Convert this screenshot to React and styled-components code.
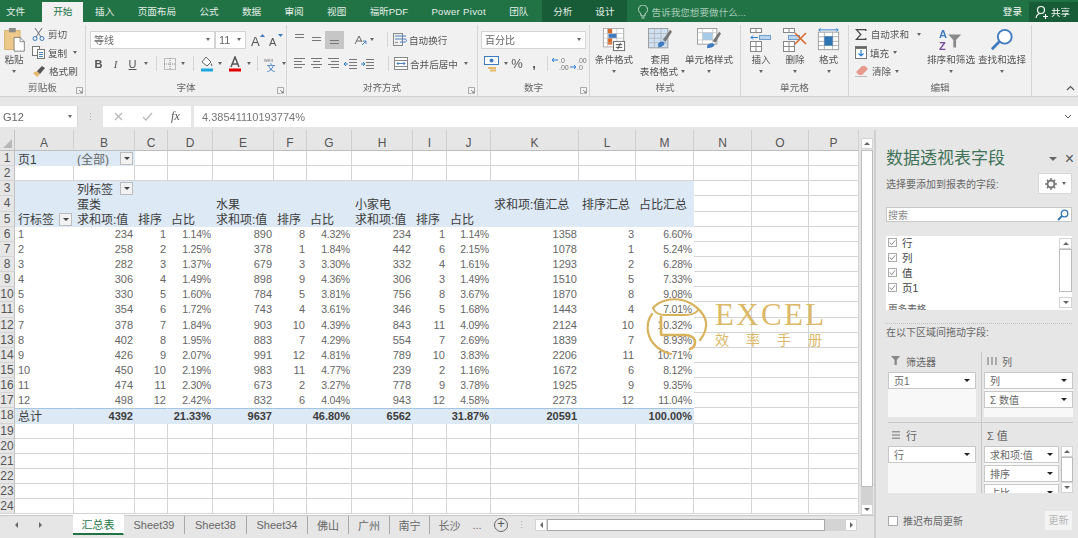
import React from "react";
import styled, { createGlobalStyle } from "styled-components";

const GlobalStyle = createGlobalStyle`
  html, body { margin: 0; padding: 0; background: #e6e6e6; overflow: hidden; }
  * { box-sizing: border-box; }
  #root { width: 1078px; height: 538px; }
`;

const Page = styled.div`
  width: 1078px;
  height: 538px;
  display: flex;
  flex-direction: column;
  position: relative;
  overflow: hidden;
  font-family: "Liberation Sans", "Noto Sans CJK SC", sans-serif;
  color: #555;
  filter: blur(0.45px);
`;

/* title bar */
const TitleBar = styled.div`
  height: 22px;
  flex: none;
  background: #217346;
  display: flex;
  align-items: flex-end;
  color: #e4efe8;
  font-size: 9.6px;
`;
const MenuTab = styled.div`
  height: 20px;
  line-height: 20px;
  padding: 0 ${(p) => p.$pad ?? 11.7}px 0 ${(p) => p.$padLeft ?? p.$pad ?? 11.7}px;
  white-space: nowrap;
  letter-spacing: ${(p) => p.$ls ?? 0}px;
  ${(p) => p.$active && "background:#f1f1f1;color:#217346;padding:0 11px;"}
`;
const ContextTabs = styled.div`
  display: flex;
  height: 22px;
  align-items: flex-end;
  background: #185c37;
  margin-left: 2px;
`;
const TellMe = styled.div`
  display: flex;
  align-items: center;
  gap: 4px;
  height: 20px;
  margin-left: 11px;
  color: #a9cdb8;
  flex: 1;
`;
const Login = styled.div`
  height: 20px;
  line-height: 20px;
  margin-right: 7px;
  color: #fff;
`;
const Share = styled.div`
  width: 49px;
  height: 20px;
  display: flex;
  align-items: center;
  gap: 2px;
  padding-left: 6px;
  background: #185c37;
  color: #fff;
`;

/* ribbon */
const Ribbon = styled.div`
  height: 75px;
  flex: none;
  background: #f1f1f1;
  border-bottom: 1px solid #d2d2d2;
  display: flex;
  padding-top: 3px;
  position: relative;
  font-size: 9.6px;
`;
const Group = styled.div`
  width: ${(p) => p.$w}px;
  height: 71px;
  flex: none;
  display: flex;
  flex-direction: column;
  border-right: 1px solid #d6d6d6;
  padding-left: ${(p) => p.$pl ?? 0}px;
`;
const GroupBody = styled.div`
  flex: 1;
  display: flex;
  min-height: 0;
`;
const GroupLabel = styled.div`
  height: 15px;
  line-height: 14px;
  text-align: center;
  color: #666;
  position: relative;
  margin-left: ${(p) => (p.$pl ? -p.$pl : 0)}px;
`;
const Launcher = styled.svg`
  position: absolute;
  right: 2px;
  bottom: 2px;
  width: 7px;
  height: 7px;
`;
const BigButton = styled.div`
  width: ${(p) => p.$w}px;
  flex: none;
  display: flex;
  flex-direction: column;
  align-items: center;
  line-height: 12px;
  text-align: center;
  padding-top: ${(p) => p.$pt ?? 3}px;
  color: #555;
  white-space: nowrap;
  svg { flex: none; height: 24px; }
`;
const BigLabel = styled.div`
  margin-top: 2px;
  line-height: 12px;
`;
const SecondLine = styled.div`
  display: flex;
  align-items: center;
  gap: 3px;
  line-height: 11px;
  margin-left: 5px;
`;
const Caret = styled.span`
  display: inline-block;
  width: 0;
  height: 0;
  border-left: 2.5px solid transparent;
  border-right: 2.5px solid transparent;
  border-top: 3px solid #666;
  margin: 0 ${(p) => p.$m ?? 0}px;
  vertical-align: middle;
  flex: none;
`;
const CaretRow = styled.div`
  height: 10px;
  line-height: 7px;
  margin-top: 1px;
`;
const SmallCol = styled.div`
  display: flex;
  flex-direction: column;
  width: ${(p) => (p.$w ? `${p.$w}px` : "auto")};
  flex: none;
  margin-left: ${(p) => p.$ml ?? 0}px;
`;
const SmallBtn = styled.div`
  height: ${(p) => p.$h ?? 18.5}px;
  display: flex;
  align-items: center;
  gap: ${(p) => p.$gap ?? 3}px;
  white-space: nowrap;
  color: #555;
`;
const ToolCol = styled.div`
  display: flex;
  flex-direction: column;
  gap: 7px;
  padding-top: 6px;
`;
const ToolRow = styled.div`
  height: 17px;
  display: flex;
  align-items: center;
`;
const Select = styled.div`
  width: ${(p) => p.$w}px;
  height: 18px;
  flex: none;
  background: #fff;
  border: 1px solid #d4d4d4;
  display: flex;
  align-items: center;
  justify-content: space-between;
  padding: 0 4px 0 3px;
  color: #666;
  font-size: ${(p) => p.$fs ?? 10}px;
`;
const Tool = styled.div`
  width: ${(p) => p.$w ?? 17}px;
  height: ${(p) => (p.$on ? 18 : 17)}px;
  flex: none;
  display: flex;
  align-items: center;
  justify-content: center;
  font-size: ${(p) => p.$fs ?? 11}px;
  font-weight: ${(p) => (p.$bold ? 700 : 400)};
  font-style: ${(p) => (p.$italic ? "italic" : "normal")};
  text-decoration: ${(p) => (p.$under ? "underline" : "none")};
  font-family: ${(p) => (p.$serif ? '"Liberation Serif", serif' : "inherit")};
  color: #555;
  background: ${(p) => (p.$on ? "#c6c6c6" : "transparent")};
`;
const VSep = styled.div`
  width: 1px;
  height: ${(p) => p.$h ?? 15}px;
  background: #d6d6d6;
  margin: 0 ${(p) => p.$m ?? 4}px 0 ${(p) => p.$ml ?? p.$m ?? 4}px;
  flex: none;
`;
const Collapse = styled.svg`
  position: absolute;
  right: 3px;
  bottom: 5px;
  width: 9px;
  height: 6px;
`;

/* formula bar */
const FormulaBar = styled.div`
  height: 33px;
  flex: none;
  background: #e6e6e6;
  display: flex;
  align-items: flex-start;
  padding-top: 9px;
  color: #777;
  font-size: 11px;
`;
const NameBox = styled.div`
  width: 78px;
  height: 21px;
  background: #fff;
  border-right: 1px solid #d6d6d6;
  display: flex;
  align-items: center;
  justify-content: space-between;
  padding: 0 5px 0 3px;
  color: #666;
`;
const Grip = styled.div`
  width: 25px;
  height: 21px;
  display: flex;
  align-items: center;
  justify-content: center;
  color: #aaa;
  font-size: 9px;
`;
const FxBox = styled.div`
  width: 88px;
  height: 21px;
  background: #fff;
  display: flex;
  align-items: center;
  justify-content: space-around;
  padding: 0 2px;
  color: #bbb;
  font-size: 13px;
`;
const FxLabel = styled.span`
  font-family: "Liberation Serif", serif;
  font-style: italic;
  color: #555;
  font-size: 12px;
`;
const FormulaInput = styled.div`
  flex: 1;
  height: 21px;
  margin-left: 3px;
  background: #fff;
  display: flex;
  align-items: center;
  justify-content: space-between;
  padding: 0 6px 0 8px;
  color: #777;
`;

/* sheet */
const Main = styled.div`
  flex: 1;
  display: flex;
  min-height: 0;
`;
const SheetArea = styled.div`
  width: 876px;
  flex: none;
  display: flex;
  flex-direction: column;
  border-right: 2px solid #cfcfcf;
`;
const SheetBody = styled.div`
  flex: 1;
  display: flex;
  min-height: 0;
  position: relative;
`;
const Grid = styled.div`
  width: 859px;
  flex: none;
  display: grid;
  grid-template-columns: 15px 59px 61px 33px 45px 61px 33px 45px 61px 34px 44px 88px 57px 58px 58px 57px 50px;
  grid-template-rows: 21px repeat(24, 15.15px);
  background: #fff;
  overflow: hidden;
  font-size: 11px;
`;
const Corner = styled.div`
  background: #e6e6e6;
  border-right: 1px solid #c4c4c4;
  border-bottom: 1px solid #bdbdbd;
  display: flex;
  align-items: flex-end;
  justify-content: flex-end;
  padding: 0 2px 2px 0;
`;
const ColHead = styled.div`
  background: #e6e6e6;
  border-right: 1px solid #cfcfcf;
  border-bottom: 1px solid #bdbdbd;
  text-align: center;
  line-height: 27px;
  color: #555;
  font-size: 12px;
`;
const RowHead = styled.div`
  background: #e6e6e6;
  border-right: 1px solid #c0c0c0;
  border-bottom: 1px solid #d4d4d4;
  color: #555;
  font-size: 12px;
  line-height: 15px;
  text-align: center;
  overflow: hidden;
  white-space: nowrap;
`;
const Cell = styled.div`
  position: relative;
  display: flex;
  align-items: center;
  justify-content: ${(p) => (p.$right ? "flex-end" : "flex-start")};
  padding: 0 1px 0 3px;
  white-space: nowrap;
  background: ${(p) => (p.$blue ? "#dde9f5" : "#fff")};
  border-right: 1px solid ${(p) => (p.$blue || p.$plain ? "transparent" : "#d4d4d4")};
  border-bottom: 1px solid ${(p) => (p.$blue || p.$plain ? "transparent" : "#d4d4d4")};
  border-top: ${(p) => (p.$topline ? "1px solid #a4c4e4" : "none")};
  color: ${(p) => (p.$dark ? "#3c3c3c" : "#666")};
  font-weight: ${(p) => (p.$bold ? 700 : 400)};
  font-size: ${(p) => (p.$pct ? 10.5 : p.$cjk ? 12 : 11)}px;
  letter-spacing: ${(p) => (p.$pct ? "-0.2px" : "0")};
`;
const FilterBtn = styled.span`
  position: absolute;
  right: 1px;
  top: 1px;
  width: 13px;
  height: 13px;
  background: #f2f2f2;
  border: 1px solid #bcbcbc;
  display: flex;
  align-items: center;
  justify-content: center;
  &::after {
    content: "";
    border-left: 3px solid transparent;
    border-right: 3px solid transparent;
    border-top: 3px solid #444;
  }
`;
const VScroll = styled.div`
  width: 15px;
  flex: none;
  background: #e6e6e6;
  padding: 8px 1px 0 2px;
  display: flex;
  flex-direction: column;
`;
const ScrollThumb = styled.div`
  flex: 1;
  background: #fff;
  border: 1px solid #bcbcbc;
  margin-top: ${(p) => p.$mt ?? 0}px;
`;
const ScrollGap = styled.div`
  flex: none;
  height: ${(p) => p.$h}px;
  background: ${(p) => p.$bg ?? "transparent"};
`;
const ScrollBtn = styled.div`
  width: ${(p) => p.$w ?? 12}px;
  height: ${(p) => p.$h ?? 11}px;
  flex: none;
  background: #fff;
  border: 1px solid #d4d4d4;
  display: flex;
  align-items: center;
  justify-content: center;
`;
const Tri = styled.span`
  width: 0;
  height: 0;
  ${(p) =>
    p.$dir === "up"
      ? "border-left:3px solid transparent;border-right:3px solid transparent;border-bottom:3px solid #666;"
      : p.$dir === "left"
      ? "border-top:3px solid transparent;border-bottom:3px solid transparent;border-right:3px solid #666;"
      : p.$dir === "right"
      ? "border-top:3px solid transparent;border-bottom:3px solid transparent;border-left:3px solid #666;"
      : "border-left:3px solid transparent;border-right:3px solid transparent;border-top:3px solid #666;"}
`;

/* sheet tabs */
const TabBar = styled.div`
  height: 23px;
  flex: none;
  background: #e6e6e6;
  display: flex;
  align-items: flex-start;
  font-size: 11px;
  color: #666;
  border-top: 1px solid #c8c8c8;
`;
const TabNav = styled.div`
  width: 73px;
  height: 18px;
  display: flex;
  align-items: center;
  padding-left: 15px;
  gap: 21px;
  flex: none;
`;
const SheetTab = styled.div`
  width: ${(p) => p.$w}px;
  height: 18px;
  flex: none;
  display: flex;
  align-items: center;
  justify-content: center;
  border-right: 1px solid ${(p) => (p.$active ? "transparent" : "#a8a8a8")};
  ${(p) =>
    p.$active &&
    "background:#fff;color:#217346;border-bottom:2px solid #217346;height:20px;margin-top:-1px;"}
  ${(p) => p.$noline && "border-right-color:transparent;"}
`;
const AddSheet = styled.div`
  width: 14px;
  height: 14px;
  margin: 2px 0 0 9px;
  border: 1.5px solid #666;
  border-radius: 50%;
  flex: none;
  color: #555;
  line-height: 10px;
  text-align: center;
  font-size: 13px;
`;
const TabGrip = styled.div`
  width: 27px;
  height: 18px;
  line-height: 18px;
  text-align: center;
  color: #aaa;
  font-size: 9px;
  flex: none;
`;
const HScroll = styled.div`
  width: 322px;
  height: 12px;
  margin-top: 3px;
  display: flex;
  flex: none;
  background: #d4d4d4;
`;
const HThumb = styled.div`
  width: 278px;
  background: #fff;
  border: 1px solid #aaa;
`;
const HSpace = styled.div`
  flex: 1;
`;

/* field panel */
const Panel = styled.div`
  flex: 1;
  background: #e6e6e6;
  padding: 18px 6px 0 10px;
  display: flex;
  flex-direction: column;
  font-size: 10px;
  color: #666;
  min-width: 0;
`;
const PanelHead = styled.div`
  height: 22px;
  display: flex;
  align-items: center;
  justify-content: space-between;
`;
const PanelTitle = styled.div`
  font-size: 17px;
  color: #3f7257;
  line-height: 22px;
  white-space: nowrap;
`;
const PanelTools = styled.div`
  display: flex;
  align-items: center;
  gap: 8px;
  color: #555;
  font-size: 16px;
  margin-right: -2px;
`;
const PanelCaret = styled.span`
  width: 0;
  height: 0;
  border-left: 4px solid transparent;
  border-right: 4px solid transparent;
  border-top: 4px solid #666;
`;
const ChooseRow = styled.div`
  display: flex;
  align-items: center;
  justify-content: space-between;
  margin-top: 3px;
  height: 21px;
`;
const GearBtn = styled.div`
  width: 34px;
  height: 21px;
  background: #fff;
  border: 1px solid #d8d8d8;
  display: flex;
  align-items: center;
  justify-content: space-around;
  padding: 0 3px;
`;
const SearchBox = styled.div`
  height: 15px;
  margin-top: 13px;
  background: #fff;
  border: 1px solid #c8c8c8;
  display: flex;
  align-items: center;
  justify-content: space-between;
  padding: 0 2px 0 1px;
  color: #888;
`;
const FieldList = styled.div`
  height: 74px;
  margin-top: 14px;
  background: #fff;
  display: flex;
  overflow: hidden;
`;
const FieldItems = styled.div`
  flex: 1;
  padding: 0 0 0 2px;
`;
const FieldItem = styled.div`
  height: 15px;
  display: flex;
  align-items: center;
  gap: 5px;
  color: #444;
  font-size: 10.5px;
  &:first-child { margin-top: -1px; }
`;
const CheckBox = styled.span`
  width: ${(p) => p.$size ?? 9}px;
  height: ${(p) => p.$size ?? 9}px;
  border: 1px solid #aaa;
  background: #fff;
  display: flex;
  align-items: center;
  justify-content: center;
  flex: none;
`;
const MoreTables = styled.div`
  margin-top: 8px;
  height: 12px;
  line-height: 12px;
  color: #666;
  font-size: 9.6px;
`;
const ListScroll = styled.div`
  width: 13px;
  flex: none;
  padding: 2px 0;
  display: flex;
  flex-direction: column;
  background: #fff;
`;
const DotLine = styled.div`
  margin: 13px 0 0 -1px;
  border-top: 1px dotted #c0c0c0;
  height: 1px;
`;
const DragTip = styled.div`
  margin-top: 2px;
  line-height: 14px;
`;
const Areas = styled.div`
  margin: 12px 0 0 2px;
  display: grid;
  grid-template-columns: 93px 92px;
  grid-template-rows: 71px 70px;
  height: 141px;
`;
const Area = styled.div`
  display: flex;
  flex-direction: column;
  overflow: hidden;
  ${(p) => p.$right && "border-left:1px solid #c8c8c8;padding-left:2px;"}
  ${(p) => !p.$right && "padding-right:5px;"}
  ${(p) => p.$top && "border-bottom:1px solid #c8c8c8;padding-bottom:5px;"}
  ${(p) => !p.$top && "padding-top:3px;"}
`;
const AreaHead = styled.div`
  height: 18px;
  flex: none;
  margin-bottom: 2px;
  display: flex;
  align-items: center;
  gap: 5px;
  padding-left: 3px;
  color: #666;
  font-size: ${(p) => p.$fs ?? 10}px;
`;
const AreaBox = styled.div`
  background: #f8f8f8;
  flex: 1;
  display: flex;
  flex-direction: column;
  gap: 2px;
  min-height: 0;
`;
const AreaItem = styled.div`
  height: 17px;
  flex: none;
  background: #fff;
  border: 1px solid #c8c8c8;
  display: flex;
  align-items: center;
  justify-content: space-between;
  padding: 0 5px;
  color: #666;
  span:first-child { white-space: nowrap; }
`;
const BlackCaret = styled.span`
  width: 0;
  height: 0;
  border-left: 3px solid transparent;
  border-right: 3px solid transparent;
  border-top: 3px solid #222;
  flex: none;
`;
const ValuesWrap = styled.div`
  flex: 1;
  display: flex;
  gap: 2px;
  min-height: 0;
`;
const ValuesList = styled.div`
  flex: 1;
  display: flex;
  flex-direction: column;
  gap: 2px;
  background: #f8f8f8;
  overflow: hidden;
`;
const ValuesScroll = styled.div`
  width: 12px;
  flex: none;
  display: flex;
  flex-direction: column;
  background: #fff;
`;
const PanelFoot = styled.div`
  display: flex;
  align-items: center;
  justify-content: space-between;
  margin-top: 18px;
  height: 19px;
  padding-left: 2px;
`;
const FootLeft = styled.div`
  display: flex;
  align-items: center;
  gap: 5px;
`;
const UpdateBtn = styled.div`
  width: 27px;
  height: 19px;
  background: #f3f3f3;
  color: #b5b5b5;
  text-align: center;
  line-height: 19px;
`;

/* watermark lies over the sheet */
const Watermark = styled.div`
  position: absolute;
  left: 640px;
  top: 162px;
  display: flex;
  pointer-events: none;
`;
const MarkText = styled.div`
  display: flex;
  flex-direction: column;
  color: #dcb968;
`;
const MarkTitle = styled.div`
  font-family: "Liberation Serif", serif;
  font-size: 31px;
  line-height: 30px;
  letter-spacing: 2.3px;
  margin-top: 8px;
`;
const MarkSub = styled.div`
  font-size: 14px;
  line-height: 18px;
  letter-spacing: 17px;
  white-space: nowrap;
  margin-top: 1px;
`;

const Launch = () => (
  <Launcher viewBox="0 0 7 7">
    <path d="M.5 .5h6v6M.5 .5v6h3" fill="none" stroke="#999" strokeWidth=".8" />
    <path d="M3 3l3 3M4 6h2V4" fill="none" stroke="#777" strokeWidth=".8" />
  </Launcher>
);

const PasteIcon = () => (
  <svg width="25" height="28" viewBox="0 0 25 28">
    <rect x="1" y="3" width="18" height="22" fill="#ecc98b" stroke="#d3ae6c" />
    <rect x="6" y="0" width="8" height="5" fill="#8a8a8a" />
    <path d="M12 11h7l5 5v11H12z" fill="#fff" stroke="#777" />
    <path d="M19 11v5h5" fill="none" stroke="#777" />
  </svg>
);
const ScissorsIcon = () => (
  <svg width="13" height="13" viewBox="0 0 13 13" fill="none" stroke="#667" strokeWidth="1">
    <path d="M3 0l6 9M10 0L4 9" />
    <circle cx="3" cy="10.5" r="2" stroke="#3f7cbf" />
    <circle cx="10" cy="10.5" r="2" stroke="#3f7cbf" />
  </svg>
);
const CopyIcon = () => (
  <svg width="13" height="13" viewBox="0 0 13 13" fill="#fff" stroke="#777">
    <rect x=".5" y=".5" width="7" height="9" />
    <rect x="5.5" y="3.5" width="7" height="9" />
    <path d="M7 6.5h4M7 8.5h4M7 10.5h4" stroke="#4d82c0" />
  </svg>
);
const BrushIcon = () => (
  <svg width="14" height="13" viewBox="0 0 14 13">
    <path d="M1 8l4 4 3-3-3-3z" fill="#e5b969" />
    <path d="M5 6l5-5 3 2-5 6z" fill="#555" />
  </svg>
);
const GrowIcon = ({ small }) => (
  <svg width="16" height="16" viewBox="0 0 16 16">
    <text x="1" y="14" fontSize={small ? 11 : 13} fill="#555" fontFamily="Liberation Sans">A</text>
    <path d={small ? "M10 2h5l-2.500 3z" : "M10 5h5l-2.500-3z"} fill="#3f7cbf" />
  </svg>
);
const BorderIcon = () => (
  <svg width="12" height="12" viewBox="0 0 12 12" fill="none" stroke="#888" strokeDasharray="1 1">
    <rect x=".5" y=".5" width="11" height="11" />
    <path d="M6 0v12M0 6h12" />
  </svg>
);
const FillIcon = () => (
  <svg width="14" height="16" viewBox="0 0 14 16">
    <path d="M6 1l5 5-4 4-5-4z" fill="#fff" stroke="#666" />
    <path d="M11 7c1 1.300 2 2.500 1 3-1 .2-1.500-1.500-1-3z" fill="#666" />
    <rect x="1" y="12.500" width="12" height="3" fill="#1ea7e1" />
  </svg>
);
const FontColorIcon = () => (
  <svg width="14" height="16" viewBox="0 0 14 16">
    <path d="M3 11L7 1l4 10M4.500 8h5" fill="none" stroke="#555" strokeWidth="1.500" />
    <rect x="1" y="12.500" width="12" height="3" fill="#e00000" />
  </svg>
);
const PhoneticIcon = () => (
  <svg width="16" height="16" viewBox="0 0 16 16">
    <text x="1" y="6" fontSize="5" fill="#777" fontFamily="Liberation Sans">wén</text>
    <text x="3.500" y="15" fontSize="9" fill="#3f7cbf" fontFamily="Noto Sans CJK SC">文</text>
  </svg>
);
const AlignLines = ({ rows, y = 0 }) => (
  <svg width="13" height="13" viewBox="0 0 13 13" stroke="#777" fill="none">
    {rows.map(([x1, x2], i) => (
      <path key={i} d={`M${x1} ${y + 1.5 + i * 3}H${x2}`} />
    ))}
  </svg>
);
const IndentIcon = ({ out }) => (
  <svg width="13" height="13" viewBox="0 0 13 13" fill="none" stroke="#777">
    <path d="M5 2.500h8M5 5.500h8M5 8.500h8M5 11.500h8" />
    <path d={out ? "M4 7H0M2 5L0 7l2 2" : "M0 7h4M2 5l2 2-2 2"} stroke="#2b7cd3" />
  </svg>
);
const WrapIcon = () => (
  <svg width="14" height="13" viewBox="0 0 14 13" fill="none" stroke="#888">
    <rect x=".5" y=".5" width="9" height="12" />
    <path d="M2 3h11M2 6h10c2 0 2 3 0 3H7" stroke="#4d82c0" />
    <path d="M2 9.500h3" />
  </svg>
);
const MergeIcon = () => (
  <svg width="14" height="13" viewBox="0 0 14 13" fill="#fff" stroke="#888">
    <rect x=".5" y=".5" width="13" height="12" />
    <path d="M0 3.500h14M0 9.500h14" />
    <path d="M3 6.500h8M3 6.500l1.500-1.500M3 6.500L4.500 8M11 6.500L9.500 5M11 6.500L9.500 8" stroke="#4d82c0" />
  </svg>
);
const OrientIcon = () => (
  <svg width="14" height="14" viewBox="0 0 14 14" fill="none" stroke="#666">
    <path d="M2 11l4-8 3 6M3.500 8h5" />
    <path d="M9 12l4-4M13 11V8h-3" stroke="#4d82c0" />
  </svg>
);
const CurrencyIcon = () => (
  <svg width="15" height="16" viewBox="0 0 15 16">
    <rect x=".5" y=".5" width="14" height="8" fill="#fff" stroke="#3f7cbf" />
    <circle cx="7.500" cy="4.500" r="2" fill="#3f7cbf" />
    <path d="M4 11h8v2H4zM6 13.500h6v2H6z" fill="#e5b969" />
  </svg>
);
const DecimalIcon = ({ a, b, left }) => (
  <svg width="18" height="16" viewBox="0 0 18 16" fill="#777">
    <text x="8" y="7" fontSize="7" fontFamily="Liberation Sans">{a}</text>
    <text x="8" y="14" fontSize="7" fontFamily="Liberation Sans">{b}</text>
    <path d={left ? "M1 4h6M1 4l2-2M1 4l2 2" : "M1 11h6M7 11l-2-2M7 11l-2 2"} fill="none" stroke="#2b7cd3" />
  </svg>
);
const CondIcon = () => (
  <svg width="24" height="26" viewBox="0 0 24 26" fill="none">
    <rect x=".5" y=".5" width="22" height="20" fill="#fff" stroke="#aaa" />
    <rect x="5" y="1" width="5" height="5" fill="#d96a2b" />
    <rect x="6" y="6" width="9" height="5" fill="#3f7cbf" />
    <rect x="5" y="11" width="5" height="7" fill="#d96a2b" />
    <path d="M5 1v20M15 1v20M1 6h22M1 11h22M1 16h22" stroke="#bbb" strokeWidth=".7" />
    <rect x="11.500" y="14.500" width="12" height="10" fill="#fff" stroke="#666" />
    <path d="M14 18h7M14 21h7M19 16l-3 7" stroke="#444" />
  </svg>
);
const TableIcon = () => (
  <svg width="26" height="26" viewBox="0 0 26 26" fill="none">
    <rect x=".5" y=".5" width="21" height="21" fill="#cfe0f2" stroke="#999" />
    <path d="M7 1v20M14 1v20M1 6h20M1 11h20M1 16h20" stroke="#aaa" strokeWidth=".7" />
    <path d="M16 13l8-11 2 2-7 11z" fill="#777" />
    <path d="M11 17c2-3 5-3 7-1 0 3-4 5-7 5z" fill="#3f7cbf" />
  </svg>
);
const CellStyleIcon = () => (
  <svg width="26" height="26" viewBox="0 0 26 26" fill="none">
    <rect x=".5" y=".5" width="21" height="17" fill="#fff" stroke="#999" />
    <rect x="6" y="5" width="11" height="8" fill="#a9cbea" />
    <path d="M6 1v17M17 1v17M1 5h20M1 13h20" stroke="#bbb" strokeWidth=".7" />
    <path d="M17 14l7-10 2 2-6 10z" fill="#777" />
    <path d="M11 19c2-3 6-3 8-1 0 2-3 4-8 4z" fill="#3f7cbf" />
  </svg>
);
const InsertIcon = () => (
  <svg width="22" height="24" viewBox="0 0 22 24" fill="none" stroke="#888">
    <rect x=".5" y=".5" width="11" height="4" fill="#fff" />
    <path d="M6 1v3" />
    <rect x="9.500" y="7.500" width="11" height="4" fill="#bcd4ec" stroke="#6f9fd0" />
    <path d="M1 9.500h7M1 9.500l2-2M1 9.500l2 2" stroke="#2b7cd3" />
    <rect x=".5" y="13.500" width="11" height="10" fill="#fff" />
    <path d="M6 14v9M1 18.500h11" />
  </svg>
);
const DeleteIcon = () => (
  <svg width="24" height="24" viewBox="0 0 24 24" fill="none" stroke="#888">
    <rect x=".5" y=".5" width="11" height="4" fill="#fff" />
    <path d="M6 1v3" />
    <rect x="5.500" y="7.500" width="11" height="4" fill="#bcd4ec" stroke="#6f9fd0" />
    <rect x=".5" y="13.500" width="11" height="10" fill="#fff" />
    <path d="M6 14v9M1 18.500h11" />
    <path d="M12 5l11 11M23 5L12 16" stroke="#d9662a" strokeWidth="1.500" />
  </svg>
);
const FormatIcon = () => (
  <svg width="23" height="26" viewBox="0 0 23 26" fill="none" stroke="#999">
    <path d="M1 2h21M1 2l2-1.500M1 2l2 1.500M22 2l-2-1.500M22 2l-2 1.500" stroke="#2b7cd3" />
    <rect x=".5" y="4.500" width="22" height="19" fill="#fff" />
    <path d="M7 5v18M16 5v18M1 9.500h21M1 14.500h21M1 19h21" strokeWidth=".8" />
    <rect x="7" y="9" width="9" height="10" fill="#2f75b5" stroke="none" />
  </svg>
);
const SigmaIcon = () => (
  <svg width="14" height="13" viewBox="0 0 14 13" fill="none" stroke="#444" strokeWidth="1.300">
    <path d="M12 2.500V1H1.500l5 5.500-5 5.500H12v-1.500" />
  </svg>
);
const FillDownIcon = () => (
  <svg width="12" height="13" viewBox="0 0 12 13" fill="#fff" stroke="#777">
    <rect x=".5" y=".5" width="11" height="12" />
    <rect x=".5" y=".5" width="11" height="2" fill="#666" />
    <path d="M6 4v6M3.500 7.500L6 10l2.500-2.500" stroke="#2b7cd3" fill="none" strokeWidth="1.200" />
  </svg>
);
const EraserIcon = () => (
  <svg width="14" height="12" viewBox="0 0 14 12">
    <path d="M1 7l6-6h3l3 3-6 6H4z" fill="#e79a8b" />
    <path d="M0 11.500h12" stroke="#bbb" />
  </svg>
);
const SortIcon = () => (
  <svg width="26" height="26" viewBox="0 0 26 26">
    <text x="0" y="11" fontSize="12" fontWeight="700" fill="#3f7cbf" fontFamily="Liberation Sans">A</text>
    <text x="0" y="24" fontSize="12" fontWeight="700" fill="#7a4a9c" fontFamily="Liberation Sans">Z</text>
    <path d="M10 7h14l-5.500 6v8h-3v-8z" fill="#8a8a8a" />
  </svg>
);
const FindIcon = () => (
  <svg width="26" height="26" viewBox="0 0 26 26" fill="none">
    <circle cx="16" cy="9.500" r="7.500" fill="#fff" stroke="#3f7cbf" strokeWidth="2" />
    <path d="M10 15L2 23" stroke="#3f7cbf" strokeWidth="3" />
  </svg>
);
const BulbIcon = () => (
  <svg width="10" height="14" viewBox="0 0 10 14" fill="none" stroke="#c5dccd">
    <path d="M3 9C1 7 .5 6 .5 4.500a4.500 4.500 0 0 1 9 0C9.500 6 9 7 7 9v2H3zM3.500 13h3" />
  </svg>
);
const UserIcon = () => (
  <svg width="14" height="14" viewBox="0 0 14 14" fill="none" stroke="#fff" strokeWidth="1.200">
    <circle cx="6" cy="5" r="3.500" />
    <path d="M1 13c.5-3 2.500-4.500 5-4.500M8 11.500h5M10.500 9v5" />
  </svg>
);
const FxCheck = () => (
  <svg width="11" height="9" viewBox="0 0 11 9" fill="none" stroke="#bbb" strokeWidth="1.300">
    <path d="M1 5l3 3 6-7" />
  </svg>
);
const FxCross = () => (
  <svg width="9" height="9" viewBox="0 0 9 9" fill="none" stroke="#bbb" strokeWidth="1.300">
    <path d="M1 1l7 7M8 1L1 8" />
  </svg>
);
const Tick = () => (
  <svg width="8" height="7" viewBox="0 0 8 7" fill="none" stroke="#777">
    <path d="M1 3.500L3 6l4-5" />
  </svg>
);
const GearIcon = () => (
  <svg width="12" height="12" viewBox="0 0 12 12">
    <circle cx="6" cy="6" r="3.500" fill="none" stroke="#777" strokeWidth="2" />
    <path d="M6 0v2M6 10v2M0 6h2M10 6h2M1.800 1.800l1.400 1.400M8.800 8.800l1.400 1.400M1.800 10.200l1.400-1.400M8.800 3.200l1.400-1.400" stroke="#777" strokeWidth="1.500" />
  </svg>
);
const SearchIcon = () => (
  <svg width="12" height="12" viewBox="0 0 12 12" fill="none" stroke="#2f75b5" strokeWidth="1.300">
    <circle cx="7.500" cy="4.500" r="3.300" />
    <path d="M5 7l-4 4" strokeWidth="1.800" />
  </svg>
);
const FunnelIcon = () => (
  <svg width="10" height="10" viewBox="0 0 10 10">
    <path d="M0 0h9L5.800 4v5H3.500V4z" fill="#888" />
  </svg>
);
const ColsIcon = () => (
  <svg width="10" height="10" viewBox="0 0 10 10" fill="#aaa">
    <path d="M0 1h2v8H0zM4 1h2v8H4zM8 1h2v8H8z" />
  </svg>
);
const RowsIcon = () => (
  <svg width="10" height="10" viewBox="0 0 10 10" fill="#999">
    <path d="M1 1h8v1.500H1zM1 4.300h8v1.500H1zM1 7.500h8V9H1z" />
  </svg>
);
const LogoMark = () => (
  <svg width="75" height="65" viewBox="0 0 75 65" fill="none" stroke="#d9b25c" strokeLinecap="round">
    <path d="M13 16C20 8 32 6 42 8c12 3 22 12 24 22 1 7-2 13-6 18" strokeWidth="2.200" />
    <path d="M12 22C6 30 6 42 13 51c4 5 10 9 18 11" strokeWidth="2.200" />
    <path d="M13 16c2 5 6 7 12 7h20c6 0 11-2 13-5" strokeWidth="2" />
    <path d="M21 25v17c0 1 1 1 2 1h22c6 0 10 3 10 7 0 4-2 6-5 7" strokeWidth="2.600" />
  </svg>
);

const columns = ["A", "B", "C", "D", "E", "F", "G", "H", "I", "J", "K", "L", "M", "N", "O", "P"];

const rows = [
  ["1", "234", "1", "1.14%", "890", "8", "4.32%", "234", "1", "1.14%", "1358", "3", "6.60%"],
  ["2", "258", "2", "1.25%", "378", "1", "1.84%", "442", "6", "2.15%", "1078", "1", "5.24%"],
  ["3", "282", "3", "1.37%", "679", "3", "3.30%", "332", "4", "1.61%", "1293", "2", "6.28%"],
  ["4", "306", "4", "1.49%", "898", "9", "4.36%", "306", "3", "1.49%", "1510", "5", "7.33%"],
  ["5", "330", "5", "1.60%", "784", "5", "3.81%", "756", "8", "3.67%", "1870", "8", "9.08%"],
  ["6", "354", "6", "1.72%", "743", "4", "3.61%", "346", "5", "1.68%", "1443", "4", "7.01%"],
  ["7", "378", "7", "1.84%", "903", "10", "4.39%", "843", "11", "4.09%", "2124", "10", "10.32%"],
  ["8", "402", "8", "1.95%", "883", "7", "4.29%", "554", "7", "2.69%", "1839", "7", "8.93%"],
  ["9", "426", "9", "2.07%", "991", "12", "4.81%", "789", "10", "3.83%", "2206", "11", "10.71%"],
  ["10", "450", "10", "2.19%", "983", "11", "4.77%", "239", "2", "1.16%", "1672", "6", "8.12%"],
  ["11", "474", "11", "2.30%", "673", "2", "3.27%", "778", "9", "3.78%", "1925", "9", "9.35%"],
  ["12", "498", "12", "2.42%", "832", "6", "4.04%", "943", "12", "4.58%", "2273", "12", "11.04%"],
];
const total = ["总计", "4392", "", "21.33%", "9637", "", "46.80%", "6562", "", "31.87%", "20591", "", "100.00%"];
const headRows = {
  3: { 1: "列标签" },
  4: { 1: "蛋类", 4: "水果", 7: "小家电", 10: "求和项:值汇总", 11: "排序汇总", 12: "占比汇总" },
  5: {
    0: "行标签", 1: "求和项:值", 2: "排序", 3: "占比", 4: "求和项:值", 5: "排序", 6: "占比",
    7: "求和项:值", 8: "排序", 9: "占比",
  },
};
const isPct = (t) => t.endsWith("%");

function SheetCells() {
  const cells = [];
  for (let r = 1; r <= 24; r++) {
    cells.push(<RowHead key={`h${r}`}>{r}</RowHead>);
    for (let c = 0; c < 16; c++) {
      const key = `${r}-${c}`;
      if (r === 1 && c < 2) {
        cells.push(
          <Cell key={key} $blue $cjk $dark={c === 0}>
            {c === 0 ? "页1" : "(全部)"}
            {c === 1 && <FilterBtn />}
          </Cell>
        );
      } else if (r >= 3 && r <= 5 && c < 13) {
        cells.push(
          <Cell key={key} $blue $dark $cjk>
            {headRows[r][c]}
            {((r === 3 && c === 1) || (r === 5 && c === 0)) && <FilterBtn />}
          </Cell>
        );
      } else if (r >= 6 && r <= 17 && c < 13) {
        const text = rows[r - 6][c];
        cells.push(
          <Cell key={key} $plain $right={c > 0} $pct={isPct(text)}>
            {text}
          </Cell>
        );
      } else if (r === 18 && c < 13) {
        const text = total[c];
        cells.push(
          <Cell key={key} $blue $topline $dark $cjk={c === 0} $bold={c > 0} $right={c > 0}>
            {text}
          </Cell>
        );
      } else {
        cells.push(<Cell key={key} />);
      }
    }
  }
  return cells;
}

export default function App() {
  return (
    <Page>
      <GlobalStyle />
      <TitleBar>
        <MenuTab $padLeft={6} $pad={17}>文件</MenuTab>
        <MenuTab $active>开始</MenuTab>
        <MenuTab>插入</MenuTab>
        <MenuTab>页面布局</MenuTab>
        <MenuTab>公式</MenuTab>
        <MenuTab>数据</MenuTab>
        <MenuTab>审阅</MenuTab>
        <MenuTab>视图</MenuTab>
        <MenuTab>福昕PDF</MenuTab>
        <MenuTab $ls={0.3}>Power Pivot</MenuTab>
        <MenuTab>团队</MenuTab>
        <ContextTabs>
          <MenuTab $pad={11}>分析</MenuTab>
          <MenuTab $pad={12}>设计</MenuTab>
        </ContextTabs>
        <TellMe>
          <BulbIcon />
          告诉我您想要做什么...
        </TellMe>
        <Login>登录</Login>
        <Share>
          <UserIcon />
          共享
        </Share>
      </TitleBar>

      <Ribbon>
        <Group $w={86}>
          <GroupBody>
            <BigButton $w={28} $pt={3}>
              <PasteIcon />
              <BigLabel>粘贴</BigLabel>
              <CaretRow><Caret /></CaretRow>
            </BigButton>
            <SmallCol $ml={4}>
              <SmallBtn><ScissorsIcon />剪切</SmallBtn>
              <SmallBtn><CopyIcon />复制 <Caret $m={3} /></SmallBtn>
              <SmallBtn><BrushIcon />格式刷</SmallBtn>
            </SmallCol>
          </GroupBody>
          <GroupLabel>剪贴板<Launch /></GroupLabel>
        </Group>

        <Group $w={201} $pl={4}>
          <GroupBody>
            <ToolCol>
              <ToolRow>
                <Select $w={125}>等线<Caret /></Select>
                <Select $w={31} $fs={11}>11<Caret /></Select>
                <VSep $h={0} $m={1} />
                <Tool $w={18}><GrowIcon /></Tool>
                <Tool $w={18}><GrowIcon small /></Tool>
              </ToolRow>
              <ToolRow>
                <Tool $bold>B</Tool>
                <Tool $italic $serif>I</Tool>
                <Tool $under>U</Tool>
                <Caret $m={3} />
                <VSep $m={5} />
                <Tool $w={16}><BorderIcon /></Tool>
                <Caret $m={3} />
                <VSep $m={5} />
                <Tool $w={16}><FillIcon /></Tool>
                <Caret $m={3} />
                <Tool $w={20}><FontColorIcon /></Tool>
                <Caret $m={2} />
                <VSep $m={4} />
                <Tool $w={18}><PhoneticIcon /></Tool>
                <Caret $m={2} />
              </ToolRow>
            </ToolCol>
          </GroupBody>
          <GroupLabel $pl={4}>字体<Launch /></GroupLabel>
        </Group>

        <Group $w={191} $pl={4}>
          <GroupBody>
            <ToolCol>
              <ToolRow>
                <Tool><AlignLines rows={[[2, 11], [2, 11]]} /></Tool>
                <Tool><AlignLines rows={[[2, 11], [2, 11]]} y={3} /></Tool>
                <Tool $on $w={19}><AlignLines rows={[[2, 11], [2, 11]]} y={6} /></Tool>
                <VSep $h={0} $m={3} />
                <Tool $w={18}><OrientIcon /></Tool>
                <Caret $m={1} />
                <VSep $ml={12} $m={5} />
                <SmallBtn $h={17} $gap={2}><WrapIcon />自动换行</SmallBtn>
              </ToolRow>
              <ToolRow>
                <Tool><AlignLines rows={[[1, 12], [1, 9], [1, 12], [1, 9]]} /></Tool>
                <Tool><AlignLines rows={[[1, 12], [3, 10], [1, 12], [3, 10]]} /></Tool>
                <Tool><AlignLines rows={[[1, 12], [4, 12], [1, 12], [4, 12]]} /></Tool>
                <Tool><IndentIcon out /></Tool>
                <Tool><IndentIcon /></Tool>
                <VSep $ml={12} $m={5} />
                <SmallBtn $h={17} $gap={2}><MergeIcon />合并后居中<Caret $m={4} /></SmallBtn>
              </ToolRow>
            </ToolCol>
          </GroupBody>
          <GroupLabel $pl={4}>对齐方式<Launch /></GroupLabel>
        </Group>

        <Group $w={112} $pl={3}>
          <GroupBody>
            <ToolCol>
              <ToolRow><Select $w={105}>百分比<Caret /></Select></ToolRow>
              <ToolRow>
                <Tool $w={21}><CurrencyIcon /></Tool>
                <Caret $m={2} />
                <Tool $w={14} $fs={13}>%</Tool>
                <Tool $w={20} $fs={13} $bold>,</Tool>
                <VSep $m={3} />
                <Tool $w={18}><DecimalIcon a=".0" b=".00" left /></Tool>
                <Tool $w={18}><DecimalIcon a=".00" b=".0" /></Tool>
              </ToolRow>
            </ToolCol>
          </GroupBody>
          <GroupLabel $pl={3}>数字<Launch /></GroupLabel>
        </Group>

        <Group $w={151} $pl={2}>
          <GroupBody>
            <BigButton $w={44}>
              <CondIcon />
              <BigLabel>条件格式</BigLabel>
              <CaretRow><Caret /></CaretRow>
            </BigButton>
            <BigButton $w={48}>
              <TableIcon />
              <BigLabel>套用</BigLabel>
              <SecondLine>表格格式<Caret /></SecondLine>
            </BigButton>
            <BigButton $w={50}>
              <CellStyleIcon />
              <BigLabel>单元格样式</BigLabel>
              <CaretRow><Caret /></CaretRow>
            </BigButton>
          </GroupBody>
          <GroupLabel $pl={2}>样式</GroupLabel>
        </Group>

        <Group $w={108} $pl={3}>
          <GroupBody>
            <BigButton $w={34}>
              <InsertIcon />
              <BigLabel>插入</BigLabel>
              <CaretRow><Caret /></CaretRow>
            </BigButton>
            <BigButton $w={34}>
              <DeleteIcon />
              <BigLabel>删除</BigLabel>
              <CaretRow><Caret /></CaretRow>
            </BigButton>
            <BigButton $w={33}>
              <FormatIcon />
              <BigLabel>格式</BigLabel>
              <CaretRow><Caret /></CaretRow>
            </BigButton>
          </GroupBody>
          <GroupLabel $pl={3}>单元格</GroupLabel>
        </Group>

        <Group $w={183} $pl={6}>
          <GroupBody>
            <SmallCol $w={71}>
              <SmallBtn><SigmaIcon />自动求和<Caret $m={5} /></SmallBtn>
              <SmallBtn><FillDownIcon />填充<Caret $m={1} /></SmallBtn>
              <SmallBtn><EraserIcon />清除<Caret $m={1} /></SmallBtn>
            </SmallCol>
            <BigButton $w={50}>
              <SortIcon />
              <BigLabel>排序和筛选</BigLabel>
              <CaretRow><Caret /></CaretRow>
            </BigButton>
            <BigButton $w={52}>
              <FindIcon />
              <BigLabel>查找和选择</BigLabel>
              <CaretRow><Caret /></CaretRow>
            </BigButton>
          </GroupBody>
          <GroupLabel $pl={6}>编辑</GroupLabel>
        </Group>
        <Collapse viewBox="0 0 9 6" fill="none" stroke="#555" strokeWidth="1.200">
          <path d="M1 5l3.500-3.500L8 5" />
        </Collapse>
      </Ribbon>

      <FormulaBar>
        <NameBox>G12<Caret /></NameBox>
        <Grip>⋮</Grip>
        <FxBox>
          <FxCross />
          <FxCheck />
          <FxLabel>fx</FxLabel>
        </FxBox>
        <FormulaInput>
          4.38541110193774%
          <svg width="8" height="5" viewBox="0 0 8 5" fill="none" stroke="#555"><path d="M1 1l3 3 3-3" /></svg>
        </FormulaInput>
      </FormulaBar>

      <Main>
        <SheetArea>
          <SheetBody>
            <Grid>
              <Corner>
                <svg width="9" height="9" viewBox="0 0 9 9"><path d="M9 0v9H0z" fill="#b8b8b8" /></svg>
              </Corner>
              {columns.map((c) => <ColHead key={c}>{c}</ColHead>)}
              <SheetCells />
            </Grid>
            <VScroll>
              <ScrollBtn><Tri $dir="up" /></ScrollBtn>
              <ScrollThumb $mt={1} />
              <ScrollGap $h={17} $bg="#d2d2d2" />
              <ScrollBtn><Tri /></ScrollBtn>
            </VScroll>
            <Watermark>
              <LogoMark />
              <MarkText>
                <MarkTitle>EXCEL</MarkTitle>
                <MarkSub>效率手册</MarkSub>
              </MarkText>
            </Watermark>
          </SheetBody>
          <TabBar>
            <TabNav><Tri $dir="left" /><Tri $dir="right" /></TabNav>
            <SheetTab $active $w={51}>汇总表</SheetTab>
            <SheetTab $w={61}>Sheet39</SheetTab>
            <SheetTab $w={62}>Sheet38</SheetTab>
            <SheetTab $w={61}>Sheet34</SheetTab>
            <SheetTab $w={41}>佛山</SheetTab>
            <SheetTab $w={41}>广州</SheetTab>
            <SheetTab $w={40}>南宁</SheetTab>
            <SheetTab $w={40} $noline>长沙</SheetTab>
            <SheetTab $w={15} $noline>...</SheetTab>
            <AddSheet>+</AddSheet>
            <TabGrip>⋮</TabGrip>
            <HScroll>
              <ScrollBtn $h={12}><Tri $dir="left" /></ScrollBtn>
              <HThumb />
              <HSpace />
              <ScrollBtn $h={12}><Tri $dir="right" /></ScrollBtn>
            </HScroll>
          </TabBar>
        </SheetArea>

        <Panel>
          <PanelHead>
            <PanelTitle>数据透视表字段</PanelTitle>
            <PanelTools><PanelCaret />×</PanelTools>
          </PanelHead>
          <ChooseRow>
            选择要添加到报表的字段:
            <GearBtn><GearIcon /><Caret /></GearBtn>
          </ChooseRow>
          <SearchBox>搜索<SearchIcon /></SearchBox>
          <FieldList>
            <FieldItems>
              <FieldItem><CheckBox><Tick /></CheckBox>行</FieldItem>
              <FieldItem><CheckBox><Tick /></CheckBox>列</FieldItem>
              <FieldItem><CheckBox><Tick /></CheckBox>值</FieldItem>
              <FieldItem><CheckBox><Tick /></CheckBox>页1</FieldItem>
              <MoreTables>更多表格</MoreTables>
            </FieldItems>
            <ListScroll>
              <ScrollBtn $w={13}><Tri $dir="up" /></ScrollBtn>
              <ScrollThumb />
              <ScrollGap $h={5} />
              <ScrollBtn $w={13}><Tri /></ScrollBtn>
            </ListScroll>
          </FieldList>
          <DotLine />
          <DragTip>在以下区域间拖动字段:</DragTip>
          <Areas>
            <Area $top>
              <AreaHead><FunnelIcon />筛选器</AreaHead>
              <AreaBox>
                <AreaItem><span>页1</span><BlackCaret /></AreaItem>
              </AreaBox>
            </Area>
            <Area $top $right>
              <AreaHead><ColsIcon />列</AreaHead>
              <AreaBox>
                <AreaItem><span>列</span><BlackCaret /></AreaItem>
                <AreaItem><span>Σ 数值</span><BlackCaret /></AreaItem>
              </AreaBox>
            </Area>
            <Area>
              <AreaHead $fs={11}><RowsIcon />行</AreaHead>
              <AreaBox>
                <AreaItem><span>行</span><BlackCaret /></AreaItem>
              </AreaBox>
            </Area>
            <Area $right>
              <AreaHead $fs={11}>Σ 值</AreaHead>
              <ValuesWrap>
                <ValuesList>
                  <AreaItem><span>求和项:值</span><BlackCaret /></AreaItem>
                  <AreaItem><span>排序</span><BlackCaret /></AreaItem>
                  <AreaItem><span>占比</span><BlackCaret /></AreaItem>
                </ValuesList>
                <ValuesScroll>
                  <ScrollBtn><Tri $dir="up" /></ScrollBtn>
                  <ScrollThumb />
                  <ScrollBtn><Tri /></ScrollBtn>
                </ValuesScroll>
              </ValuesWrap>
            </Area>
          </Areas>
          <PanelFoot>
            <FootLeft><CheckBox $size={10} />推迟布局更新</FootLeft>
            <UpdateBtn>更新</UpdateBtn>
          </PanelFoot>
        </Panel>
      </Main>
    </Page>
  );
}
